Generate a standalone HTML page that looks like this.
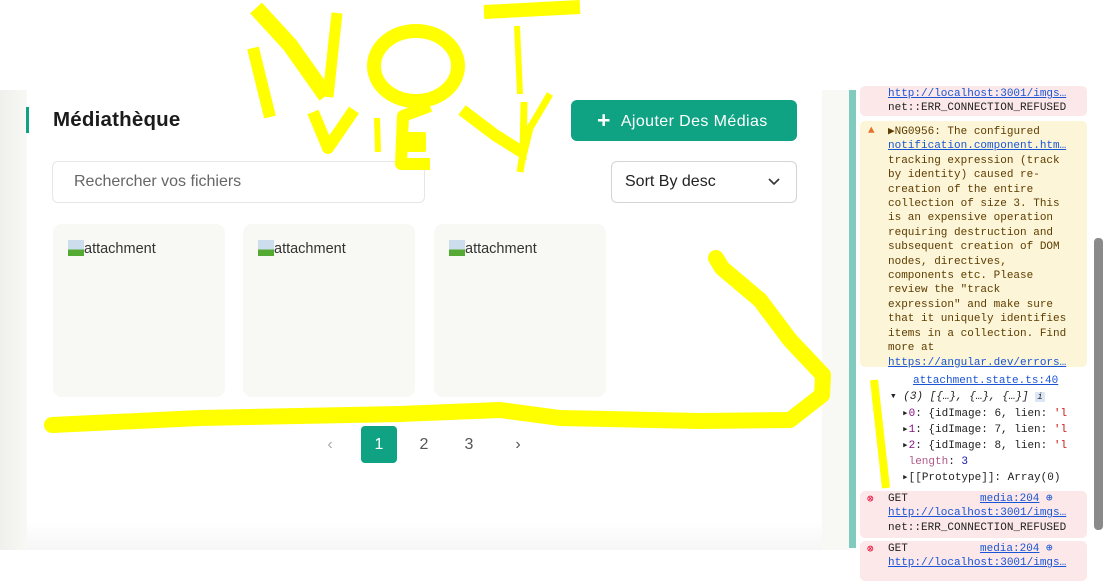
<!DOCTYPE html>
<html><head><meta charset="utf-8"><style>
*{box-sizing:border-box;margin:0;padding:0}
body{width:1105px;height:569px;overflow:hidden;background:#fff;font-family:"Liberation Sans",Arial,sans-serif;position:relative}
.abs{position:absolute}
.left{left:0;top:90px;width:27px;height:460px;background:linear-gradient(90deg,#efefec,#f8f8f4)}
.main{left:27px;top:90px;width:795px;height:460px;background:linear-gradient(180deg,#fff 0,#fff 94%,#f6f6f6 100%)}
.rstrip{left:822px;top:90px;width:27px;height:460px;background:#f8f8f4}
.tealbar{left:849px;top:90px;width:7px;height:458px;background:#80cbbd}
.cons{left:856px;top:90px;width:249px;height:479px;background:#fff;font-family:"Liberation Mono","DejaVu Sans Mono",monospace;font-size:11px;line-height:14.4px;color:#222}
.err{position:absolute;left:4px;width:227px;background:#fce8e8;border-radius:5px;padding-left:28px}
.warn{position:absolute;left:4px;width:227px;background:#fdf5d7;border-radius:5px;padding:4px 0 0 28px;color:#5c3c00}
a{color:#1a55d6;text-decoration:underline}
.card{top:224px;width:172px;height:173px;background:#f8f8f4;border-radius:9px;font-size:14.5px;color:#333;padding:16px 0 0 15px}
.card i{display:inline-block;width:16px;height:16px;vertical-align:-3px;background:linear-gradient(180deg,#cde 0,#cde 60%,#5a3 60%)}
.pg{top:426px;height:37px;width:36px;font-size:16px;color:#555;text-align:center;line-height:37px}
</style></head><body>
<div class="abs left"></div>
<div class="abs main"></div>
<div class="abs rstrip"></div>
<div class="abs tealbar"></div>
<div class="abs" style="left:26px;top:107px;width:3px;height:26px;background:#0fa384"></div>
<div class="abs" style="left:53px;top:108px;font-size:20.5px;font-weight:bold;color:#1b1b1b;letter-spacing:0.2px">Médiathèque</div>
<div class="abs" style="left:571px;top:100px;width:226px;height:41px;background:#0fa384;border-radius:6px;color:#fff;font-size:16px;line-height:41px;padding-left:26px;letter-spacing:0.4px"><span style="font-size:23px;font-weight:bold;vertical-align:-2px;margin-right:10px">+</span>Ajouter Des Médias</div>
<div class="abs" style="left:52px;top:161px;width:373px;height:42px;border:1px solid #e6e6e6;border-radius:6px;font-size:16px;color:#666;line-height:40px;padding-left:21px">Rechercher vos fichiers</div>
<div class="abs" style="left:611px;top:161px;width:186px;height:42px;border:1px solid #d4d4d8;border-radius:6px;font-size:16px;color:#222;line-height:40px;padding-left:13px">Sort By desc
<svg style="position:absolute;right:16px;top:16px" width="12" height="8"><path d="M1 1l5 5 5-5" stroke="#333" stroke-width="1.6" fill="none"/></svg></div>
<div class="abs card" style="left:53px"><i></i>attachment</div>
<div class="abs card" style="left:243px"><i></i>attachment</div>
<div class="abs card" style="left:434px"><i></i>attachment</div>
<div class="abs pg" style="left:312px;color:#aaa">‹</div>
<div class="abs pg" style="left:361px;background:#0fa384;color:#fff;border-radius:4px">1</div>
<div class="abs pg" style="left:406px">2</div>
<div class="abs pg" style="left:451px">3</div>
<div class="abs pg" style="left:500px">›</div>

<div class="abs cons">
 <div class="err" style="top:-4px;height:30px;padding-top:1px"><a>http://localhost:3001/imgs…</a><br>net::ERR_CONNECTION_REFUSED</div>
 <div class="warn" style="top:31px;height:246px"><span style="position:absolute;left:8px;top:3px;color:#e8702a">▲</span>▶NG0956: The configured<br><a>notification.component.htm…</a><br>tracking expression (track<br>by identity) caused re-<br>creation of the entire<br>collection of size 3. This<br>is an expensive operation<br>requiring destruction and<br>subsequent creation of DOM<br>nodes, directives,<br>components etc. Please<br>review the "track<br>expression" and make sure<br>that it uniquely identifies<br>items in a collection. Find<br>more at<br><a>https://angular.dev/errors…</a></div>
 <div style="position:absolute;left:57px;top:284px"><a>attachment.state.ts:40</a></div>
 <div style="position:absolute;left:34px;top:300px;font-style:italic">▾ (3) [{…}, {…}, {…}] <span style="background:#dde6f7;font-size:9px;padding:0 2px">i</span></div>
 <div style="position:absolute;left:46px;top:316px;line-height:16px;white-space:nowrap;width:166px;overflow:hidden">▸<b style="color:#881280;font-weight:normal">0</b>: {idImage: 6, lien: <span style="color:#c41a16">'l</span><br>▸<b style="color:#881280;font-weight:normal">1</b>: {idImage: 7, lien: <span style="color:#c41a16">'l</span><br>▸<b style="color:#881280;font-weight:normal">2</b>: {idImage: 8, lien: <span style="color:#c41a16">'l</span><br>&nbsp;<span style="color:#b05a8a">length</span>: <span style="color:#1a1aa6">3</span><br>▸[[Prototype]]: Array(0)</div>
 <div class="err" style="top:401px;height:47px;padding-top:1px"><span style="position:absolute;left:7px;top:2px;color:#e03;font-size:11px">⊗</span>GET<span style="position:absolute;left:120px"><a>media:204</a> <span style="color:#1a55d6">⊕</span></span><br><a>http://localhost:3001/imgs…</a><br>net::ERR_CONNECTION_REFUSED</div>
 <div class="err" style="top:451px;height:40px;padding-top:1px"><span style="position:absolute;left:7px;top:2px;color:#e03">⊗</span>GET<span style="position:absolute;left:120px"><a>media:204</a> <span style="color:#1a55d6">⊕</span></span><br><a>http://localhost:3001/imgs…</a></div>
</div>
<div class="abs" style="left:1094px;top:238px;width:9px;height:292px;background:#8a8a8a;border-radius:4px"></div>

<svg class="abs" style="left:0;top:0" width="1105" height="569">
<g stroke="#ffff00" fill="none" stroke-linecap="butt" stroke-linejoin="round">
<path d="M253 48L270 117" stroke-width="12"/>
<path d="M256 8L290 45 326 96" stroke-width="16"/>
<path d="M337 13L328 97" stroke-width="11"/>
<ellipse cx="416" cy="66" rx="42" ry="35" stroke-width="14"/>
<path d="M484 12L580 7" stroke-width="14"/>
<path d="M517 26L520 94" stroke-width="6"/>
<path d="M313 112L328 148 354 110" stroke-width="12"/>
<path d="M377 118L378 152" stroke-width="6"/>
<path d="M430 106L403 116 401 164 430 164" stroke-width="12"/>
<path d="M408 134L424 134 424 150 408 150Z" fill="#ff0" stroke-width="4"/>
<path d="M462 110L495 135 522 152" stroke-width="12"/>
<path d="M550 94L530 128 522 160 520 172M524 102L523 160" stroke-width="7"/>
<path d="M716 258L722 268 760 300 790 340 823 375 822 395 790 420 700 421 560 418 500 410 400 414 200 418 52 425" stroke-width="16" stroke-linecap="round"/>
<path d="M874 380L886 488" stroke-width="8"/>
</g></svg>
</body></html>
